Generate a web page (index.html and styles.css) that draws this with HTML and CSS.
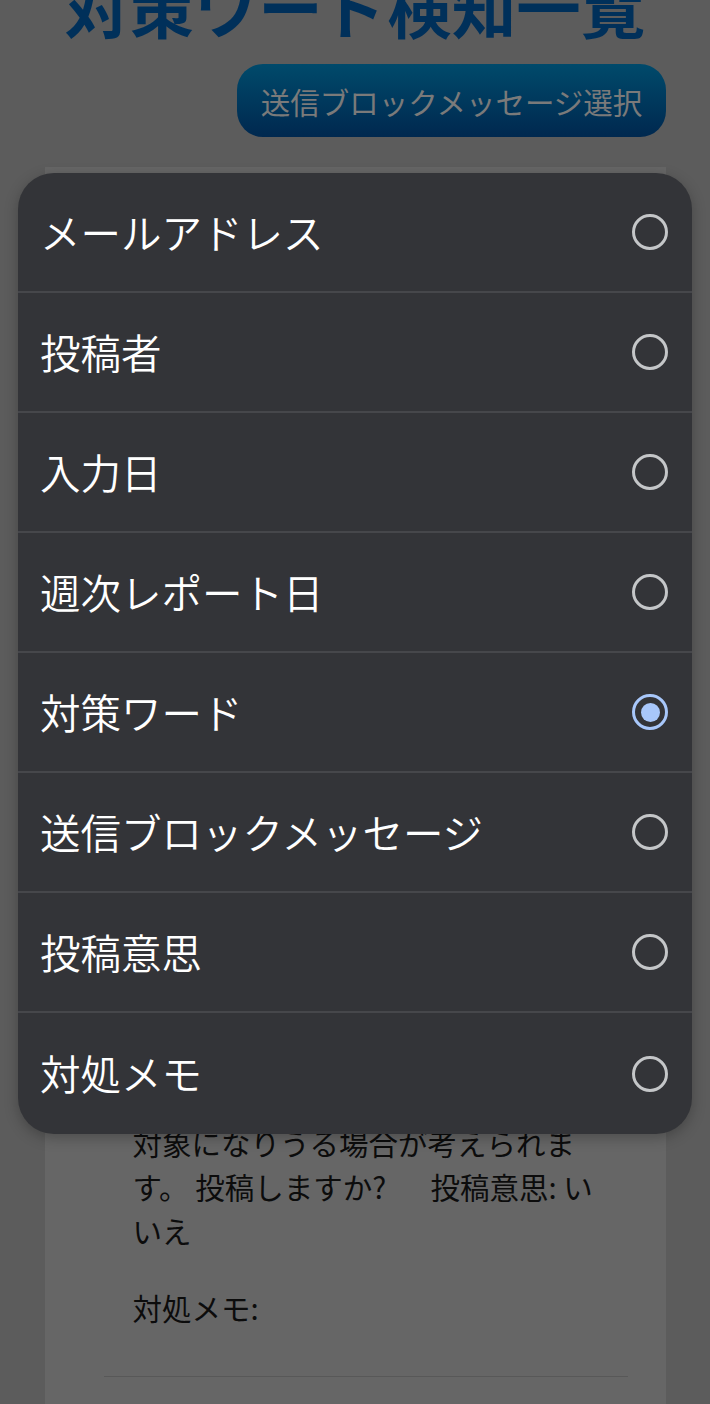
FILE: index.html
```html
<!DOCTYPE html>
<html lang="ja">
<head>
<meta charset="utf-8">
<link rel="stylesheet" href="styles.css">
</head>
<body>
<div class="page">
  <h1 class="title">対策ワード検知一覧</h1>
  <div class="actions">
    <button class="select-btn">送信ブロックメッセージ選択</button>
  </div>
  <div class="card">
    <div class="card-body">
      <p class="msg">対象になりうる場合が考えられます。 投稿しますか?&emsp;&ensp;投稿意思: いいえ</p>
      <p class="memo">対処メモ:</p>
    </div>
    <hr class="sep">
  </div>
</div>
<div class="dialog">
  <div class="row"><span class="label">メールアドレス</span><span class="radio"></span></div>
  <div class="row"><span class="label">投稿者</span><span class="radio"></span></div>
  <div class="row"><span class="label">入力日</span><span class="radio"></span></div>
  <div class="row"><span class="label">週次レポート日</span><span class="radio"></span></div>
  <div class="row"><span class="label">対策ワード</span><span class="radio checked"></span></div>
  <div class="row"><span class="label">送信ブロックメッセージ</span><span class="radio"></span></div>
  <div class="row"><span class="label">投稿意思</span><span class="radio"></span></div>
  <div class="row"><span class="label">対処メモ</span><span class="radio"></span></div>
</div>
</body>
</html>
```
FILE: styles.css
```css
html, body {
  margin: 0;
  padding: 0;
  background: #5c5c5c;
  font-family: "Noto Sans CJK JP", "Noto Sans", sans-serif;
  overflow: hidden;
  height: 1404px;
}
.page {
  width: 710px;
  height: 1404px;
  display: flex;
  flex-direction: column;
  align-items: center;
}
.title {
  margin: -39px 0 0 0;
  font-size: 64.5px;
  font-weight: 700;
  line-height: 88px;
  color: #00305a;
  white-space: nowrap;
}
.actions {
  align-self: stretch;
  display: flex;
  justify-content: flex-end;
  padding: 15px 44px 0 0;
}
.select-btn {
  height: 73px;
  width: 429px;
  border: none;
  border-radius: 26px;
  background: linear-gradient(#004a6b, #00284f);
  color: #7a7a7a;
  font-family: "Noto Sans CJK JP", sans-serif;
  font-size: 29.5px;
  padding: 0;
  white-space: nowrap;
}
.card {
  margin-top: 30px;
  width: 621px;
  flex: 1;
  background: #666666;
  box-sizing: border-box;
  padding: 0 38px 0 59px;
}
.card-body {
  padding: 953px 0 0 29px;
  width: 470px;
}
.msg {
  margin: 0;
  font-size: 29.5px;
  line-height: 44px;
  color: #0c0c0c;
}
.memo {
  margin: 33px 0 0 0;
  font-size: 29.5px;
  line-height: 44px;
  color: #0c0c0c;
}
.sep {
  margin: 47px 0 0 0;
  border: none;
  border-top: 1px solid #585858;
  width: 524px;
}
.dialog {
  position: absolute;
  left: 18px;
  top: 173px;
  width: 674px;
  background: #333438;
  border-radius: 36px;
  box-shadow: 0 4px 14px rgba(0, 0, 0, 0.25);
  overflow: hidden;
}
.row {
  height: 120px;
  box-sizing: border-box;
  border-bottom: 2px solid #46474b;
  display: flex;
  align-items: center;
  justify-content: space-between;
  padding: 0 24px 0 22px;
}
.row:last-child {
  border-bottom: none;
  height: 121px;
}
.label {
  color: #ffffff;
  font-size: 40.5px;
  font-weight: 350;
  line-height: 1;
  white-space: nowrap;
}
.radio {
  width: 36px;
  height: 36px;
  box-sizing: border-box;
  border: 3px solid #c4c6c8;
  border-radius: 50%;
  display: flex;
  align-items: center;
  justify-content: center;
}
.radio.checked {
  border-color: #a8c7fa;
}
.radio.checked::after {
  content: "";
  width: 19px;
  height: 19px;
  border-radius: 50%;
  background: #a8c7fa;
}
```
